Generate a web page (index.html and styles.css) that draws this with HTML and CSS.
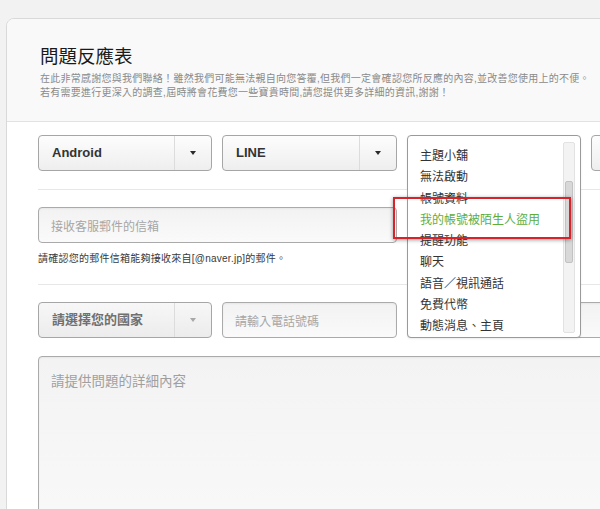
FILE: index.html
```html
<!DOCTYPE html>
<html lang="zh-Hant">
<head>
<meta charset="utf-8">
<title>問題反應表</title>
<link rel="stylesheet" href="styles.css">
</head>
<body>
<div class="card">
  <div class="card-head">
    <h1 class="title">問題反應表</h1>
    <p class="lead">在此非常感謝您與我們聯絡！雖然我們可能無法親自向您答覆,但我們一定會確認您所反應的內容,並改善您使用上的不便。<br>若有需要進行更深入的調查,屆時將會花費您一些寶貴時間,請您提供更多詳細的資訊,謝謝！</p>
  </div>
  <div class="card-body">
    <div class="row">
      <div class="select"><span class="select-label">Android</span><span class="select-btn"><span class="caret"></span></span></div>
      <div class="select"><span class="select-label">LINE</span><span class="select-btn"><span class="caret"></span></span></div>
      <div class="slot">
        <div class="listbox">
          <ul class="options">
            <li>主題小舖</li>
            <li>無法啟動</li>
            <li>帳號資料</li>
            <li class="picked">我的帳號被陌生人盜用</li>
            <li>提醒功能</li>
            <li>聊天</li>
            <li>語音／視訊通話</li>
            <li>免費代幣</li>
            <li>動態消息、主頁</li>
          </ul>
          <div class="track"><div class="thumb"></div></div>
        </div>
        <div class="highlight"></div>
      </div>
      <div class="select"><span class="select-label"></span><span class="select-btn"><span class="caret"></span></span></div>
    </div>

    <div class="rule rule-top"></div>

    <input class="field email" type="text" placeholder="接收客服郵件的信箱">
    <p class="hint">請確認您的郵件信箱能夠接收來自[@naver.jp]的郵件。</p>

    <div class="rule rule-mid"></div>

    <div class="row">
      <div class="select muted"><span class="select-label">請選擇您的國家</span><span class="select-btn"><span class="caret"></span></span></div>
      <input class="field" type="text" placeholder="請輸入電話號碼">
      <input class="field span2" type="text" placeholder="">
    </div>

    <textarea class="field detail" placeholder="請提供問題的詳細內容"></textarea>
  </div>
</div>
</body>
</html>
```

FILE: styles.css
```css
html, body {
  margin: 0;
  padding: 0;
}
html {
  background: #f2f2f2;
  overflow: hidden;
}
body {
  font-family: "Liberation Sans", "Noto Sans CJK TC", sans-serif;
  color: #333;
  width: 600px;
  height: 509px;
  overflow: hidden;
}

.card {
  margin: 18px 0 0 6px;
  width: 780px;
  min-height: 640px;
  border: 1px solid #d9d9d9;
  border-top-left-radius: 8px;
  background: #fff;
}

.card-head {
  background: #f9f9f9;
  border-bottom: 1px solid #e2e2e2;
  border-top-left-radius: 7px;
  padding: 24px 33px 22px;
}
.title {
  margin: 0;
  font-family: "Noto Sans CJK TC", sans-serif;
  font-weight: 400;
  font-size: 18.5px;
  line-height: 24px;
  color: #1a1a1a;
}
.lead {
  margin: 5px 0 0;
  font-family: "Liberation Sans", "Noto Sans CJK TC", sans-serif;
  font-size: 10px;
  line-height: 13.5px;
  letter-spacing: 0.26px;
  color: #8a8a8a;
  white-space: nowrap;
}

.card-body {
  padding: 13px 0 0 31px;
}

.row {
  display: grid;
  grid-template-columns: 174px 175px 174px 174px;
  column-gap: 10px;
  height: 36px;
}

.select {
  display: flex;
  box-sizing: border-box;
  height: 36px;
  border: 1px solid #a6a6a6;
  border-radius: 4px;
  background: linear-gradient(#fdfdfd, #eeeeee);
}
.select-label {
  flex: 1;
  padding-left: 13px;
  font-size: 13px;
  font-weight: bold;
  line-height: 34px;
  color: #333;
  white-space: nowrap;
}
.select-btn {
  width: 36px;
  border-left: 1px solid #dcdcdc;
  display: flex;
  align-items: center;
  justify-content: center;
}
.caret {
  width: 0;
  height: 0;
  border-left: 3.5px solid transparent;
  border-right: 3.5px solid transparent;
  border-top: 4px solid #2a2a2a;
}
.select.muted {
  background: linear-gradient(#f7f7f7, #ececec);
}
.select.muted .select-label {
  color: #707070;
}
.select.muted .caret {
  border-top-color: #a8a8a8;
}

.slot {
  position: relative;
}
.listbox {
  position: absolute;
  top: 0;
  left: 0;
  z-index: 5;
  box-sizing: border-box;
  width: 174px;
  height: 203px;
  border: 1px solid #9a9a9a;
  border-radius: 4px;
  background: #fff;
  display: flex;
  overflow: hidden;
  box-shadow: 0 1px 2px rgba(0, 0, 0, 0.08);
}
.options {
  flex: 1;
  list-style: none;
  margin: 0;
  padding: 8px 0 0 12px;
  font-family: "Noto Sans CJK TC", sans-serif;
  font-size: 12px;
  line-height: 21.25px;
  color: #333;
  white-space: nowrap;
}
.options .picked {
  color: #5fae3a;
}
.track {
  width: 12px;
  margin: 6px 5px 4px 0;
  box-sizing: border-box;
  border: 1px solid #e2e2e2;
  background: #f3f3f3;
  border-radius: 2px;
  padding: 38px 1px 0;
}
.thumb {
  height: 82px;
  box-sizing: border-box;
  background: #d8d8d8;
  border: 1px solid #c2c2c2;
  border-radius: 2px;
}
.highlight {
  position: absolute;
  z-index: 6;
  left: -14px;
  top: 62px;
  width: 178px;
  height: 42px;
  box-sizing: border-box;
  border: 2px solid #d8232a;
  box-shadow: 0 1px 4px rgba(0, 0, 0, 0.4);
}

.rule {
  height: 1px;
  background: #e7e7e7;
}
.rule-top {
  margin: 18px 0 17px;
}
.rule-mid {
  margin: 17px 0;
}

.field {
  display: block;
  box-sizing: border-box;
  height: 36px;
  margin: 0;
  padding: 0 12px;
  border: 1px solid #aaaaaa;
  border-radius: 4px;
  background: linear-gradient(#f2f2f2, #fafafa);
  box-shadow: inset 0 1px 2px rgba(0, 0, 0, 0.05);
  font-family: "Noto Sans CJK TC", sans-serif;
  font-size: 12px;
  color: #333;
  outline: none;
}
.field::placeholder {
  color: #a6a6a6;
}
.email {
  width: 359px;
}
.span2 {
  grid-column: 3 / 5;
  width: 100%;
}

.hint {
  margin: 8px 0 0;
  font-family: "Liberation Sans", "Noto Sans CJK TC", sans-serif;
  font-size: 10px;
  line-height: 16px;
  letter-spacing: 0.25px;
  color: #3a3a3a;
}

.detail {
  margin-top: 18px;
  width: 727px;
  height: 240px;
  padding: 13px 12px;
  font-size: 13.5px;
  line-height: 20px;
  resize: none;
  background: linear-gradient(#f3f3f3, #fbfbfb);
}
.detail::placeholder {
  color: #a0a0a0;
}
```
